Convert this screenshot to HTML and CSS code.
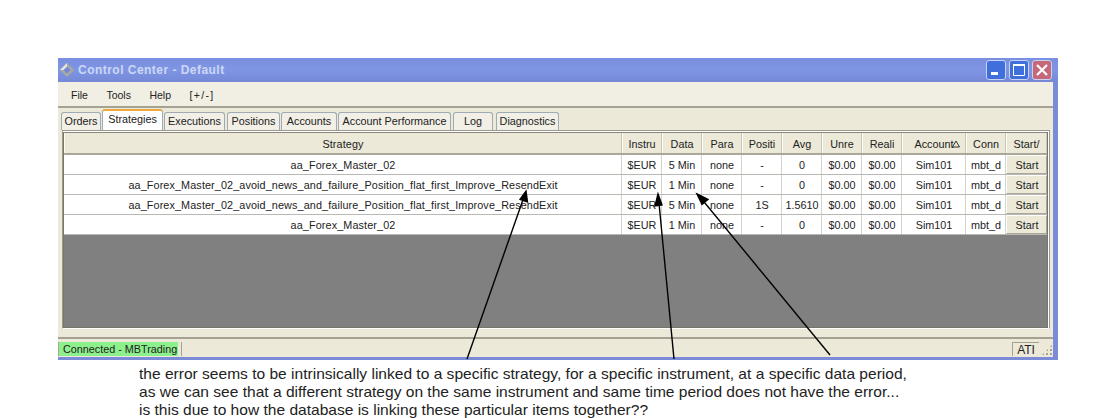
FILE: index.html
```html
<!DOCTYPE html>
<html lang="en">
<head>
<meta charset="utf-8">
<title>Control Center - Default</title>
<link rel="stylesheet" href="styles.css">
</head>
<body>
<div class="page">
  <div class="window">
    <div class="titlebar">
      <svg class="logo" width="16" height="16" viewBox="0 0 16 16"><path d="M8 1 15 8 8 15 1 8Z" fill="#a9a9a2"/><path d="M8 4.500 11.500 8 8 11.500 4.500 8Z" fill="#7388d8"/><path d="M1 8 8 1 8 4.500 4.500 8Z" fill="#e6e6dc"/></svg>
      <span class="title">Control Center - Default</span>
      <div class="controls">
        <span class="ctl ctl-min"><svg width="18" height="18" viewBox="0 0 18 18"><rect x="4" y="11" width="7" height="3" fill="#fff"/></svg></span>
        <span class="ctl ctl-max"><svg width="18" height="18" viewBox="0 0 18 18"><path d="M3.500 3.500h11v11h-11Z" fill="none" stroke="#fff"/><rect x="3" y="3" width="12" height="2" fill="#fff"/></svg></span>
        <span class="ctl ctl-close"><svg width="18" height="18" viewBox="0 0 18 18"><path d="M4 4 14 14M14 4 4 14" stroke="#fff" stroke-width="2.200"/></svg></span>
      </div>
    </div>
    <div class="inner">
      <div class="menubar"><span>File</span><span>Tools</span><span>Help</span><span>[+/-]</span></div>
      <div class="tabs">
        <span class="tab w-orders">Orders</span>
        <span class="tab active">Strategies</span>
        <span class="tab w-exec">Executions</span>
        <span class="tab w-pos">Positions</span>
        <span class="tab w-acc">Accounts</span>
        <span class="tab w-perf">Account Performance</span>
        <span class="tab w-log">Log</span>
        <span class="tab w-diag">Diagnostics</span>
      </div>
      <div class="panel">
        <div class="grid">
          <div class="row head">
            <span class="first">Strategy</span><span>Instru</span><span>Data</span><span>Para</span><span>Positi</span><span>Avg</span><span>Unre</span><span>Reali</span><span class="acct">Account<svg class="sort" width="8" height="8" viewBox="0 0 8 8"><path d="M4 1 7.500 7H.5Z" fill="none" stroke="#333"/></svg></span><span>Conn</span><span>Start/</span>
          </div>
          <div class="row">
            <span class="first">aa_Forex_Master_02</span><span>$EUR</span><span>5 Min</span><span>none</span><span>-</span><span>0</span><span>$0.00</span><span>$0.00</span><span>Sim101</span><span>mbt_d</span><span class="btn">Start</span>
          </div>
          <div class="row">
            <span class="first">aa_Forex_Master_02_avoid_news_and_failure_Position_flat_first_Improve_ResendExit</span><span>$EUR</span><span>1 Min</span><span>none</span><span>-</span><span>0</span><span>$0.00</span><span>$0.00</span><span>Sim101</span><span>mbt_d</span><span class="btn">Start</span>
          </div>
          <div class="row">
            <span class="first">aa_Forex_Master_02_avoid_news_and_failure_Position_flat_first_Improve_ResendExit</span><span>$EUR</span><span>5 Min</span><span>none</span><span>1S</span><span>1.5610</span><span>$0.00</span><span>$0.00</span><span>Sim101</span><span>mbt_d</span><span class="btn">Start</span>
          </div>
          <div class="row">
            <span class="first">aa_Forex_Master_02</span><span>$EUR</span><span>1 Min</span><span>none</span><span>-</span><span>0</span><span>$0.00</span><span>$0.00</span><span>Sim101</span><span>mbt_d</span><span class="btn">Start</span>
          </div>
          <div class="empty"></div>
        </div>
      </div>
      <div class="statusbar">
        <span class="connected">Connected - MBTrading</span>
        <span class="status-mid"></span>
        <span class="ati">ATI</span>
        <span class="grip"></span>
      </div>
    </div>
  </div>
  <p class="note">the error seems to be intrinsically linked to a specific strategy, for a specific instrument, at a specific data period,<br>as we can see that a different strategy on the same instrument and same time period does not have the error...<br>is this due to how the database is linking these particular items together??</p>
  <svg class="arrows" width="1117" height="418" viewBox="0 0 1117 418">
    <g stroke="#000" stroke-width="1.400" fill="#000">
      <path d="M467 359 525 194"/><path d="M526 191 527.500 202 520 199.500Z"/>
      <path d="M674 359 658.500 198"/><path d="M658 194 662 205 655 206Z"/>
      <path d="M830 355 700 197"/><path d="M697 194 708 199.500 702 204.500Z"/>
    </g>
  </svg>
</div>
</body>
</html>
```
FILE: styles.css
```css
* { box-sizing: border-box; }
html, body { margin: 0; padding: 0; background: #fff; }
body { width: 1117px; height: 418px; overflow: hidden; font-family: "Liberation Sans", Arial, sans-serif; color: #222; }
.page { position: relative; width: 1117px; height: 418px; padding: 58px 0 0 58px; }
.window { width: 1000px; height: 302px; display: flex; flex-direction: column; background: #7b8bd8; padding: 0 5px 3px 0; }
.titlebar { height: 24px; width: 1000px; flex: none; display: flex; align-items: center; padding: 0 6px 0 1px; background: linear-gradient(#7a8fdf, #7f96e4 50%, #7488d6); }
.logo { flex: none; }
.title { margin-left: 3px; color: #cdd7f5; font-size: 12px; font-weight: bold; letter-spacing: .47px; }
.controls { margin-left: auto; display: flex; gap: 3px; }
.ctl { width: 20px; height: 20px; border-radius: 3px; display: block; border: 1px solid #c9d2f0; }
.ctl svg { display: block; }
.ctl-min, .ctl-max { background: #3f6fdc; }
.ctl-close { background: #c4687a; }
.inner { flex: 1; min-height: 0; display: flex; flex-direction: column; background: #ece9d8; }
.menubar { height: 26px; flex: none; display: flex; align-items: center; gap: 18.500px; padding: 2px 0 0 13px; background: #f1efe4; border-bottom: 2px solid #a5a294; font-size: 10.500px; color: #222; }
.menubar span:nth-child(4) { letter-spacing: 1.300px; }
.tabs { height: 22px; flex: none; display: flex; align-items: flex-end; padding: 0 0 0 3px; gap: 1px; font-size: 10.800px; }
.tab { height: 18px; display: flex; align-items: center; justify-content: center; padding-bottom: 2px; background: #f1efe6; border: 1px solid #9eaab4; border-bottom: 0; border-radius: 3px 3px 0 0; white-space: nowrap; }
.tab.active { width: 61px; height: 21px; margin: 0; background: #fff; border-top: 2px solid #eda93a; padding-bottom: 3px; }
.w-orders { width: 40px; }
.w-exec { width: 61px; }
.w-pos { width: 53px; margin-left: 1px; }
.w-acc { width: 56px; }
.w-perf { width: 113px; }
.w-log { width: 40px; margin-left: 1px; }
.w-diag { width: 63px; margin-left: 2px; }
.panel { flex: none; width: 988px; height: 199px; margin-left: 4px; padding: 1px 1px 0 0; background: #fff; border: 1px solid #9c9a8c; border-bottom-color: #fff; }
.grid { height: 196px; display: flex; flex-direction: column; border: 1px solid #77766c; border-top-color: #8a887c; background: #808080; }
.row { height: 20px; flex: none; display: grid; grid-template-columns: 558px repeat(7, 40px) 64px 40px 41px; background: #fff; font-size: 10.800px; border-bottom: 1px solid #b9b9b4; }
.row > span { display: flex; align-items: center; justify-content: center; padding-left: 1px; border-right: 1px solid #d4d3cc; white-space: nowrap; overflow: hidden; }
.row .first { letter-spacing: .12px; }
.head { height: 22px; background: #ece9d8; border-bottom: 2px solid #aca899; }
.head > span { padding-top: 2px; border-right: 1px solid #c9c6b6; box-shadow: inset 1px 0 0 #fbfaf4; }
.acct { position: relative; }
.sort { position: absolute; right: 5px; top: 7px; }
.row > .btn { background: #ece9d8; border: 1px solid #fff; border-right-color: #a9a798; border-bottom-color: #a9a798; }
.empty { flex: 1; background: #808080; }
.statusbar { height: 20px; flex: none; margin-top: auto; display: flex; align-items: flex-start; padding-top: 3px; background: #ece9d8; border-top: 2px solid #a5a294; font-size: 10.800px; }
.connected { width: 120px; height: 14px; display: flex; align-items: center; padding-left: 4px; background: #8cf08c; border-left: 1px solid #a5a294; }
.status-mid { width: 829px; height: 14px; margin-left: 3px; border-left: 1px solid #a5a294; }
.ati { width: 27px; height: 14px; margin-left: 3px; display: flex; align-items: center; justify-content: center; border-left: 1px solid #a5a294; border-top: 1px solid #a5a294; font-size: 12px; }
.grip { width: 12px; height: 12px; margin: 2px 0 0 2px; background: radial-gradient(circle, #a5a294 1px, transparent 1.500px) 0 0 / 4px 4px; clip-path: polygon(100% 0, 100% 100%, 0 100%); }
.note { margin: 5px 0 0 81px; font-size: 15.550px; line-height: 18px; color: #222; white-space: nowrap; }
.arrows { position: absolute; left: 0; top: 0; pointer-events: none; }
```
